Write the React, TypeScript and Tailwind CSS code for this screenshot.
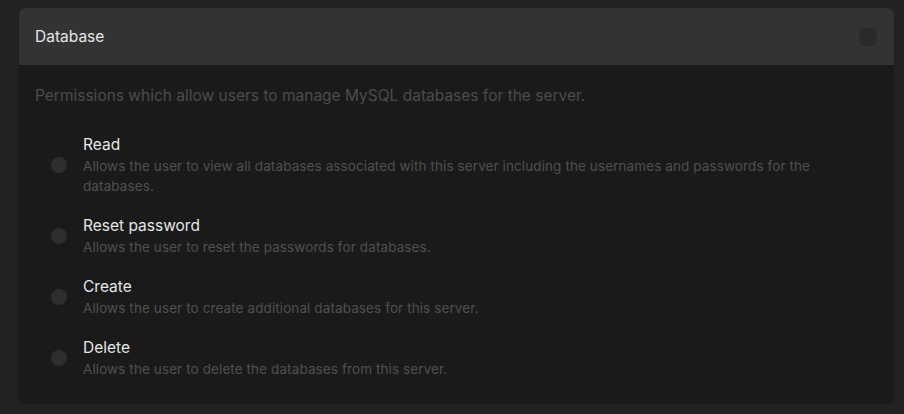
import React from 'react';

interface Permission {
  key: string;
  title: string;
  description: string;
}

const permissions: Permission[] = [
  {
    key: 'read',
    title: 'Read',
    description:
      'Allows the user to view all databases associated with this server including the usernames and passwords for the databases.',
  },
  {
    key: 'update',
    title: 'Reset password',
    description: 'Allows the user to reset the passwords for databases.',
  },
  {
    key: 'create',
    title: 'Create',
    description: 'Allows the user to create additional databases for this server.',
  },
  {
    key: 'delete',
    title: 'Delete',
    description: 'Allows the user to delete the databases from this server.',
  },
];

export default function App() {
  return (
    <div
      className="min-h-screen bg-[#222222] pt-2 pl-[19px] pr-[10px] pb-[10px]"
      style={{ fontFamily: 'Inter, "Noto Sans", sans-serif' }}
    >
      <div className="overflow-hidden rounded-t-[7px] rounded-b-[5px] bg-[#1a1a1a]">
        <div className="flex h-[57px] items-center justify-between bg-[#333333] pl-4 pr-[17px]">
          <h2 className="text-[15.5px] text-[#e6e6e6]">Database</h2>
          <span className="block h-[18px] w-[18px] rounded-[5px] bg-[#2a2a2a]" />
        </div>
        <div className="px-4 pt-5 pb-[25px]">
          <p className="text-[15.5px] leading-[22px] text-[#4c4c4c]">
            Permissions which allow users to manage MySQL databases for the server.
          </p>
          <div className="mt-[27px] flex flex-col gap-[19px] pr-10">
            {permissions.map(p => (
              <label key={p.key} className="flex items-center">
                <span className="ml-4 block h-4 w-4 shrink-0 rounded-full bg-[#2e2e2e]" />
                <div className="ml-4">
                  <div className="text-[15.5px] leading-[22px] text-[#e6e6e6]">{p.title}</div>
                  <div className="text-[13.5px] leading-[20px] tracking-[0.1px] text-[#505050]">
                    {p.description}
                  </div>
                </div>
              </label>
            ))}
          </div>
        </div>
      </div>
    </div>
  );
}
